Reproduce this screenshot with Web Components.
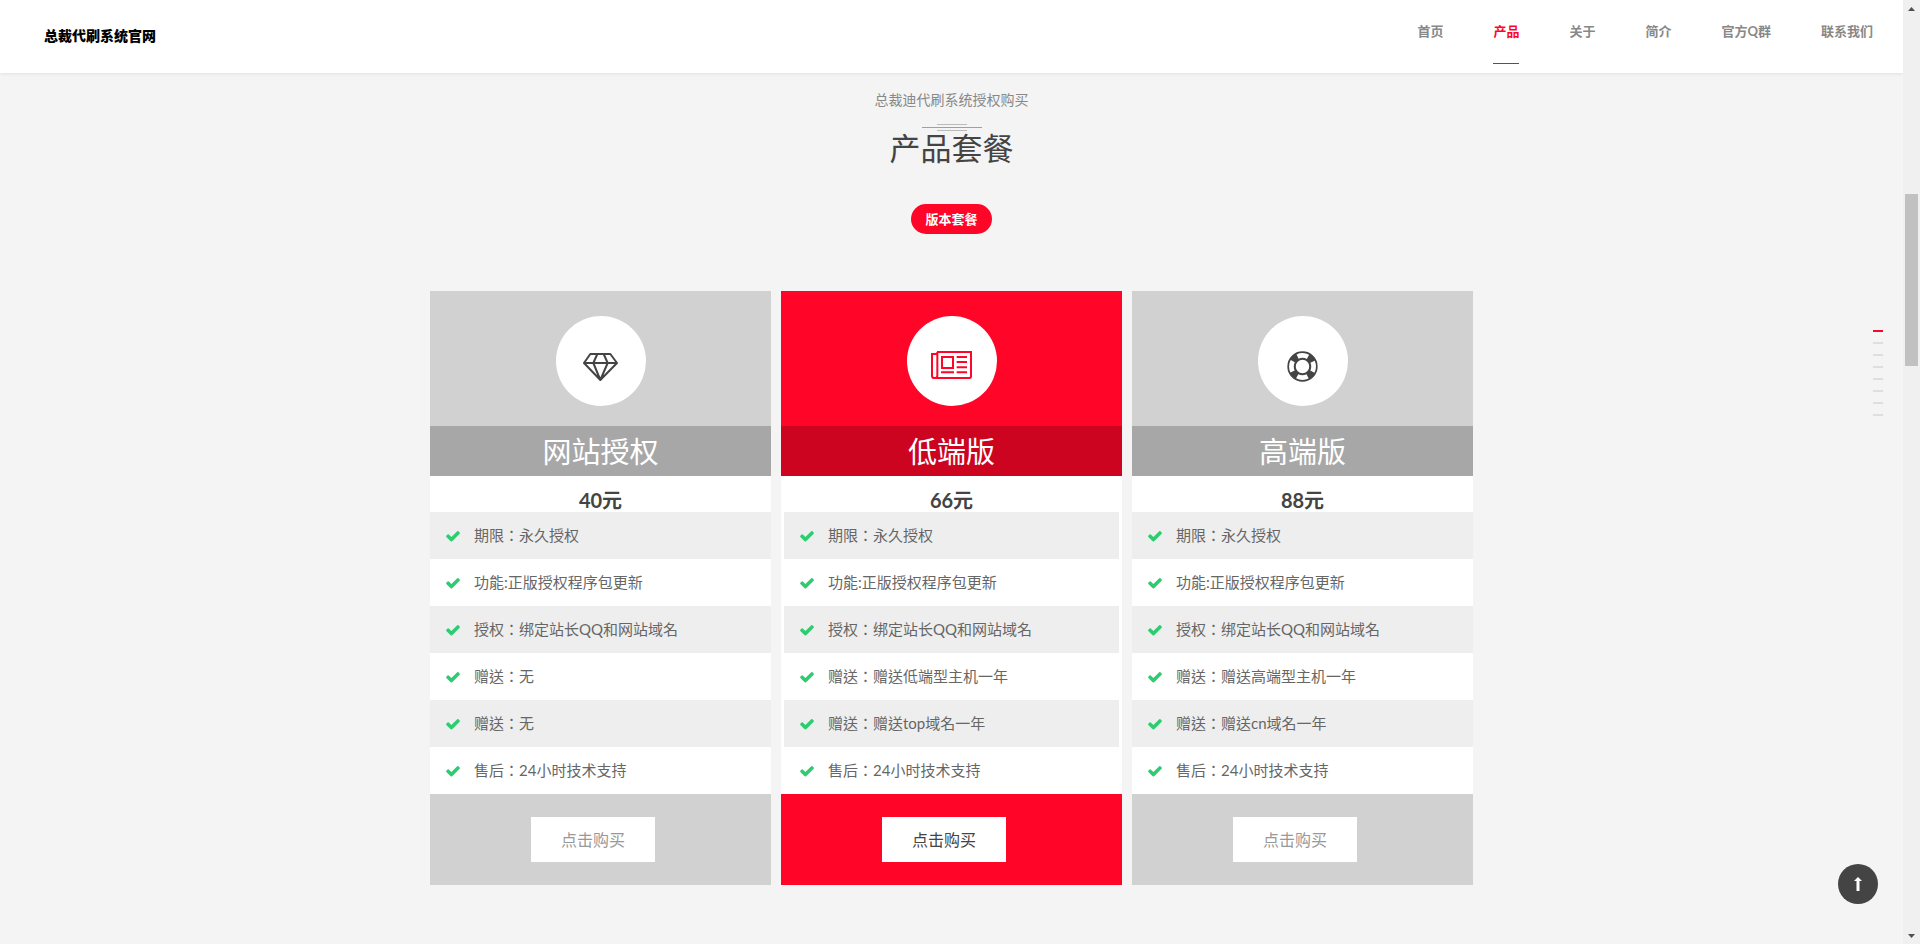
<!DOCTYPE html>
<html lang="zh-CN">
<head>
<meta charset="utf-8">
<meta name="viewport" content="width=device-width, initial-scale=1">
<title>总裁代刷系统官网</title>
<style>
  :root {
    --accent: #ff0528;
    --ink: #444;
    --muted: #888;
    --page: #f4f4f4;
  }
  body {
    margin: 0;
    background: var(--page);
    color: var(--ink);
    font-family: Lato, "Noto Sans CJK SC", sans-serif;
  }
</style>
</head>
<body>
<site-shell>
  <site-header slot="header">
    <nav-link href="#home">首页</nav-link>
    <nav-link href="#products" current>产品</nav-link>
    <nav-link href="#about">关于</nav-link>
    <nav-link href="#intro">简介</nav-link>
    <nav-link href="#group">官方Q群</nav-link>
    <nav-link href="#contact">联系我们</nav-link>
  </site-header>

  <section-heading>
    <span slot="lead">总裁迪代刷系统授权购买</span>
    产品套餐
    <span slot="tab">版本套餐</span>
  </section-heading>

  <package-grid>
    <package-card>
      <line-icon slot="icon" name="diamond"></line-icon>
      <span slot="name">网站授权</span>
      <span slot="price">40元</span>
      <package-feature>期限：永久授权</package-feature>
      <package-feature>功能:正版授权程序包更新</package-feature>
      <package-feature>授权：绑定站长QQ和网站域名</package-feature>
      <package-feature>赠送：无</package-feature>
      <package-feature>赠送：无</package-feature>
      <package-feature>售后：24小时技术支持</package-feature>
    </package-card>
    <package-card featured>
      <line-icon slot="icon" name="news"></line-icon>
      <span slot="name">低端版</span>
      <span slot="price">66元</span>
      <package-feature>期限：永久授权</package-feature>
      <package-feature>功能:正版授权程序包更新</package-feature>
      <package-feature>授权：绑定站长QQ和网站域名</package-feature>
      <package-feature>赠送：赠送低端型主机一年</package-feature>
      <package-feature>赠送：赠送top域名一年</package-feature>
      <package-feature>售后：24小时技术支持</package-feature>
    </package-card>
    <package-card>
      <line-icon slot="icon" name="ring"></line-icon>
      <span slot="name">高端版</span>
      <span slot="price">88元</span>
      <package-feature>期限：永久授权</package-feature>
      <package-feature>功能:正版授权程序包更新</package-feature>
      <package-feature>授权：绑定站长QQ和网站域名</package-feature>
      <package-feature>赠送：赠送高端型主机一年</package-feature>
      <package-feature>赠送：赠送cn域名一年</package-feature>
      <package-feature>售后：24小时技术支持</package-feature>
    </package-card>
  </package-grid>

  <section-dots slot="overlay" count="8"></section-dots>
  <to-top slot="overlay"></to-top>
  <scroll-rail slot="rail"></scroll-rail>
</site-shell>

<script>
const define = (name, render, init) => customElements.define(name, class extends HTMLElement {
  connectedCallback() {
    if (this.shadowRoot) return;
    this.attachShadow({ mode: 'open' }).innerHTML =
      '<style>*{box-sizing:border-box}:host{box-sizing:border-box}</style>' + render(this);
    if (init) init(this);
  }
});

define('site-shell', () => `
  <style>
    :host { display: grid; grid-template-columns: minmax(0, 1fr) 17px; min-height: 100vh; }
    .page { position: relative; display: flex; flex-direction: column; }
  </style>
  <div class="page">
    <slot name="header"></slot>
    <main><slot></slot></main>
    <slot name="overlay"></slot>
  </div>
  <slot name="rail"></slot>`);

define('site-header', () => `
  <style>
    :host { display: block; background: #fff; box-shadow: 0 0 4px rgba(0, 0, 0, .12); }
    header { display: flex; justify-content: space-between; align-items: flex-start;
      min-height: 73px; padding: 0 30px 0 44px; }
    .logo { color: #000; font-size: 14px; line-height: 71px; font-weight: 900;
      text-decoration: none; white-space: nowrap; }
    nav { display: flex; gap: 50px; }
  </style>
  <header>
    <a class="logo" href="#home">总裁代刷系统官网</a>
    <nav><slot></slot></nav>
  </header>`);

define('nav-link', el => `
  <style>
    :host { display: block; }
    a { display: block; border-bottom: 1px solid transparent; color: var(--muted);
      font-size: 13px; line-height: 63px; font-weight: 700; text-decoration: none; white-space: nowrap; }
    :host([current]) a { color: var(--accent); border-color: var(--accent); }
  </style>
  <a href="${el.getAttribute('href')}"><slot></slot></a>`);

define('section-heading', () => `
  <style>
    :host { display: flex; flex-direction: column; align-items: center; padding: 17px 16px 0; }
    p { margin: 0; color: var(--muted); font-size: 14px; line-height: 20px; }
    .rule { display: flex; flex-direction: column; align-items: center; gap: 2px; margin-top: 14px; }
    .rule i { width: 30px; height: 1px; background: #bbb; }
    .rule i:nth-child(2) { width: 60px; background: #ff7388; }
    h2 { margin: 0; font-size: 31px; line-height: 34px; font-weight: 400; }
    button { height: 30px; margin-top: 39px; padding: 0 14px; border: 0; border-radius: 15px;
      background: var(--accent); color: #fff; font: 700 13px/30px Lato, "Noto Sans CJK SC", sans-serif; }
  </style>
  <p><slot name="lead"></slot></p>
  <div class="rule"><i></i><i></i><i></i></div>
  <h2><slot></slot></h2>
  <button type="button"><slot name="tab"></slot></button>`);

define('package-grid', () => `
  <style>
    :host { display: grid; grid-template-columns: repeat(3, minmax(0, 1fr)); gap: 10px;
      max-width: 1043px; margin: 57px auto 59px; }
  </style>
  <slot></slot>`);

define('package-card', () => `
  <style>
    :host { display: block; --head: #d1d1d1; --bar: #a7a7a7; --action: #999; --icon: var(--ink); background: #fff; }
    :host([featured]) { --head: var(--accent); --bar: #cc0420; --action: #444; --icon: var(--accent); }
    .head { display: flex; justify-content: center; padding: 25px 0 20px; background: var(--head); color: var(--icon); }
    .disc { display: flex; align-items: center; justify-content: center; width: 90px; height: 90px;
      padding-top: 10px; border-radius: 50%; background: #fff; }
    h3 { margin: 0; padding-top: 2px; background: var(--bar); color: #fff; font-size: 29px; line-height: 48px;
      font-weight: 400; text-align: center; }
    .price { padding-top: 12px; font-size: 20px; line-height: 24px; font-weight: 700; text-align: center; }
    :host([featured]) .list { padding: 0 3px; }
    ::slotted(package-feature:nth-of-type(odd)) { background: #eee; }
    .foot { display: flex; justify-content: center; padding: 23px 15px 23px 0; background: var(--head); }
    .foot a { padding: 0 30px; background: #fff; color: var(--action); font-size: 16px;
      line-height: 45px; text-decoration: none; }
  </style>
  <div class="head"><div class="disc"><slot name="icon"></slot></div></div>
  <h3><slot name="name"></slot></h3>
  <div class="price"><slot name="price"></slot></div>
  <div class="list" role="list"><slot></slot></div>
  <div class="foot"><a href="#buy">点击购买</a></div>`);

/* The TC face without local forms sets the full-width colon in the middle of its cell. */
define('package-feature', () => `
  <style>
    :host { display: flex; align-items: center; gap: 13px; min-height: 47px; padding: 0 15px;
      color: #666; font-family: Lato, "Noto Sans CJK TC", sans-serif; font-feature-settings: "locl" 0;
      font-size: 15px; line-height: 23px; }
    svg { flex: none; width: 16px; height: 16px; fill: #2ecc71; }
  </style>
  <svg viewBox="0 0 1792 1792" aria-hidden="true"><path d="M1671 566q0 40-28 68l-724 724-136 136q-28 28-68 28t-68-28l-136-136-362-362q-28-28-28-68t28-68l136-136q28-28 68-28t68 28l294 295 656-657q28-28 68-28t68 28l136 136q28 28 28 68z"/></svg>
  <span><slot></slot></span>`, el => el.setAttribute('role', 'listitem'));

const ICONS = {
  diamond: `<svg width="35" height="30" viewBox="0 -6 105 90" fill="none" stroke="currentColor" stroke-width="6" stroke-linejoin="round">
    <path d="M22 3H82L102 30 52 81 3 30ZM3 30H102M43 3 31 30 52 81 74 30 62 3"/></svg>`,
  news: `<svg width="41" height="30" viewBox="0 0 123 90" fill="none" stroke="currentColor" stroke-width="6">
    <path d="M18 3H120V76Q120 81 115 81H10Q3 81 3 74V9H18M19 3V74Q19 80 12 81M33 18H66V51H33ZM77 18H108M77 33H108M77 49H108M77 64H108M30 64H69"/></svg>`,
  ring: `<svg width="31" height="31" viewBox="-46 -46 92 92" fill="none">
    <circle r="32.5" stroke="currentColor" stroke-width="25"/>
    <circle r="33" stroke="#fff" stroke-width="14" stroke-dasharray="32 19.84" stroke-dashoffset="16"/></svg>`
};
define('line-icon', el => `<style>:host{display:block}svg{display:block}</style>${ICONS[el.getAttribute('name')]}`);

define('section-dots', el => `
  <style>
    :host { position: absolute; right: 20px; top: 330px; }
    nav { display: flex; flex-direction: column; gap: 10px; }
    a { display: block; width: 10px; height: 2px; background: #dedede; }
    a:first-child { background: var(--accent); }
  </style>
  <nav aria-label="页面导航">${Array.from({ length: +el.getAttribute('count') },
    (_, i) => `<a href="#part${i + 1}" aria-label="${i + 1}"></a>`).join('')}</nav>`);

define('to-top', () => `
  <style>
    :host { position: absolute; right: 25px; bottom: 40px; }
    button { display: flex; align-items: center; justify-content: center; width: 40px; height: 40px;
      padding: 0; border: 0; border-radius: 50%; background: #444; }
    svg { display: block; }
  </style>
  <button type="button" aria-label="返回顶部">
    <svg width="8" height="14" viewBox="0 0 8 14" fill="#fff"><path d="M4 0 8 4H5.5V14H2.5V4H0Z"/></svg>
  </button>`, el => el.shadowRoot.querySelector('button').addEventListener('click', () => scrollTo(0, 0)));

define('scroll-rail', () => `
  <style>
    :host { position: relative; display: grid; grid-template-rows: 17px 177fr 172fr 561fr 17px; justify-items: center; background: #f0f0f0; }
    svg { align-self: center; display: block; fill: #505050; }
    .thumb { grid-row: 3; width: 13px; background: #c1c1c1; }
    .down { grid-row: 5; }
  </style>
  <svg width="7" height="4" viewBox="0 0 7 4" aria-hidden="true"><path d="M0 4 3.5 0 7 4Z"/></svg>
  <div class="thumb"></div>
  <svg class="down" width="7" height="4" viewBox="0 0 7 4" aria-hidden="true"><path d="M0 0 3.5 4 7 0Z"/></svg>`);
</script>
</body>
</html>
